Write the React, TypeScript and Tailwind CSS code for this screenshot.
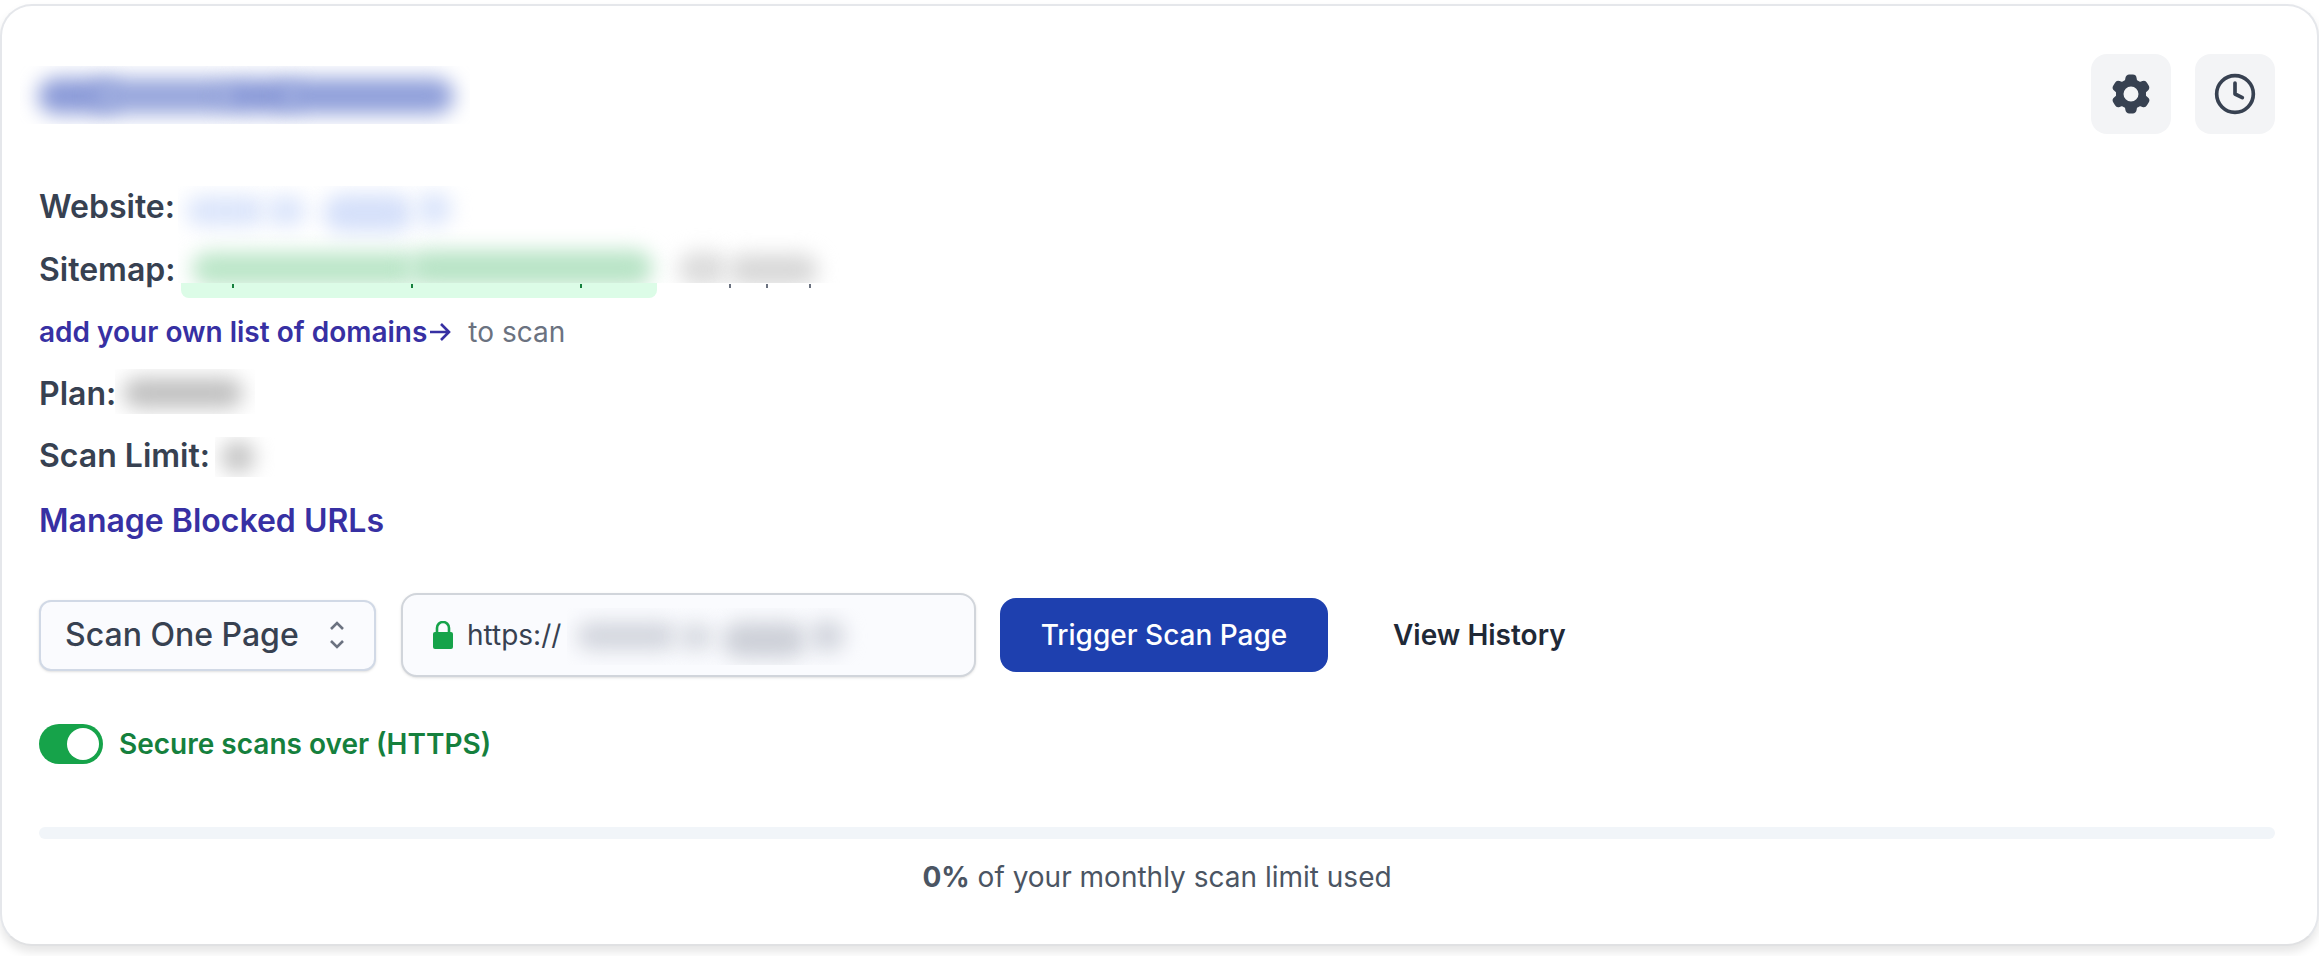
import { Clock } from "lucide-react";
import { HiCog6Tooth } from "react-icons/hi2";

// stands in for the redacted values in the reference: soft smudges clipped to a box
function Smudge({ className, blobs }: { className: string; blobs: string[] }) {
  return (
    <div className={`absolute overflow-hidden bg-white ${className}`}>
      {blobs.map((b, i) => (
        <div key={i} className={`absolute rounded-full blur-[10px] ${b}`} />
      ))}
    </div>
  );
}

export default function App() {
  return (
    <div className="h-[956px] overflow-hidden bg-white pt-1 font-['Inter',sans-serif]">
      <div className="relative h-[942px] rounded-[32px] border-2 border-[#e5e7eb] border-b-[#e0e1e3] bg-white pl-[37px] pr-[42px] shadow-[0_6px_10px_rgba(0,0,0,0.1)]">
        {/* Header */}
        <div className="flex h-[128px] items-end justify-end gap-6">
          <button className="flex h-20 w-20 items-center justify-center rounded-2xl bg-[#f3f4f6] text-[#374151]">
            <HiCog6Tooth className="h-12 w-12" />
          </button>
          <button className="flex h-20 w-20 items-center justify-center rounded-2xl bg-[#f3f4f6] text-[#374151]">
            <Clock size={44} strokeWidth={2} />
          </button>
        </div>
        <Smudge
          className="left-[18px] top-[60px] h-[58px] w-[450px]"
          blobs={[
            "left-[18px] top-[12px] h-[36px] w-[80px] bg-[#8a9ad8]",
            "left-[75px] top-[12px] h-[36px] w-[140px] bg-[#97a6dc]",
            "left-[200px] top-[12px] h-[36px] w-[80px] bg-[#8a9ad8]",
            "left-[262px] top-[12px] h-[36px] w-[172px] bg-[#8f9fda]",
          ]}
        />

        {/* Details */}
        <div className="text-[32px] font-semibold text-[#374151]">
          <div className="mt-[42px] flex h-[62px] items-center">
            <span>Website:</span>
          </div>
          <div className="flex h-[64px] items-center">
            <span>Sitemap:</span>
            <span className="relative ml-[6px] mt-[8px] h-[47px] w-[476px] rounded-lg bg-[#dcfce7]">
              {["left-[51px] bg-[#15803d]", "left-[230px] bg-[#15803d]", "left-[399px] bg-[#15803d]", "left-[548px] bg-[#6b7280]", "left-[585px] bg-[#6b7280]", "left-[628px] bg-[#6b7280]"].map((t) => (
                <span key={t} className={`absolute top-[33px] h-[4px] w-[2px] ${t}`} />
              ))}
            </span>
          </div>
          <Smudge
            className="left-[176px] top-[180px] h-[97px] w-[666px]"
            blobs={[
              "left-[8px] top-[10px] h-[30px] w-[80px] bg-[#dbe5fb]",
              "left-[88px] top-[10px] h-[30px] w-[40px] bg-[#dbe5fb]",
              "left-[145px] top-[8px] h-[38px] w-[90px] bg-[#d5e0fa]",
              "left-[238px] top-[6px] h-[34px] w-[36px] bg-[#dbe5fb]",
              "left-[14px] top-[66px] h-[34px] w-[225px] bg-[#bbe6c8]",
              "left-[230px] top-[64px] h-[36px] w-[245px] bg-[#b8e4c6]",
              "left-[500px] top-[66px] h-[34px] w-[50px] bg-[#dcdcdc]",
              "left-[550px] top-[68px] h-[32px] w-[90px] bg-[#d8d8d8]",
            ]}
          />
          <div className="flex h-[62px] items-center pb-[2px] text-[28px] font-normal">
            <a className="flex items-center font-semibold text-[#3730a3]">
              add your own list of domains
              <svg viewBox="0 0 24 24" className="ml-[1px] h-[24px] w-[24px]" fill="none" stroke="currentColor" strokeWidth="2.6">
                <path d="M2 12h19M13 4l8 8-8 8" />
              </svg>
            </a>
            <span className="ml-4 text-[#6b7280]">to scan</span>
          </div>
          <div className="flex h-[59px] items-center">Plan:</div>
          <Smudge
            className="left-[113px] top-[363px] h-[45px] w-[140px]"
            blobs={["left-[8px] top-[9px] h-[30px] w-[120px] bg-[#c0c0c0]"]}
          />
          <div className="flex h-[66px] items-center">Scan Limit:</div>
          <Smudge
            className="left-[213px] top-[431px] h-[40px] w-[60px]"
            blobs={["left-[6px] top-[4px] h-[32px] w-[34px] bg-[#c4c4c4]"]}
          />
          <div className="flex h-[64px] items-center">
            <a className="font-semibold text-[#3730a3]">Manage Blocked URLs</a>
          </div>
        </div>

        {/* Scan controls */}
        <div className="mt-[40px] flex items-center text-[28px]">
          <div className="flex h-[71px] w-[337px] items-center justify-between rounded-xl border-2 border-[#d1d9e6] bg-[#fafbfe] pl-[24px] pr-[28px] text-[32px] font-medium text-[#374151] shadow-sm">
            Scan One Page
            <svg viewBox="0 0 18 32" className="h-[32px] w-[18px]" fill="none" stroke="#6b7280" strokeWidth="2.6">
              <path d="M3 10l6-6 6 6M3 22l6 6 6-6" />
            </svg>
          </div>
          <div className="relative ml-[25px] flex h-[84px] w-[575px] items-center rounded-2xl border-2 border-[#d1d5db] bg-[#fafbfe] pl-[30px] text-[#374151] shadow-sm">
            <svg viewBox="0 0 20 28" className="h-[28px] w-[20px]" fill="#16a34a">
              <rect x="0" y="11" width="20" height="17" rx="2" />
              <path d="M4 12V7a6 6 0 0 1 12 0v5" fill="none" stroke="#16a34a" strokeWidth="2.6" />
            </svg>
            <span className="ml-[14px]">https://</span>
            <Smudge
              className="left-[164px] top-[13px] h-[57px] w-[305px] !bg-[#fafbfe]"
              blobs={[
                "left-[10px] top-[14px] h-[28px] w-[100px] bg-[#d2d5dd]",
                "left-[112px] top-[16px] h-[26px] w-[34px] bg-[#d5d8df]",
                "left-[155px] top-[14px] h-[36px] w-[85px] bg-[#cdd0d8]",
                "left-[242px] top-[12px] h-[32px] w-[36px] bg-[#d2d5dd]",
              ]}
            />
          </div>
          <button className="ml-[24px] h-[74px] w-[328px] rounded-2xl bg-[#1e40af] font-medium text-white">
            Trigger Scan Page
          </button>
          <button className="ml-[65px] font-semibold text-[#1f2937]">View History</button>
        </div>

        {/* HTTPS toggle */}
        <div className="mt-[46px] flex items-center">
          <div className="flex h-10 w-[64px] items-center justify-end rounded-full bg-[#16a34a] pr-[4px]">
            <div className="h-8 w-8 rounded-full bg-white" />
          </div>
          <span className="ml-4 text-[28px] font-semibold text-[#15803d]">Secure scans over (HTTPS)</span>
        </div>

        {/* Usage */}
        <div className="mt-[62px] h-3 rounded-full bg-[#f1f5f9]" />
        <p className="mt-[17px] text-center text-[28px] text-[#4b5563]">
          <span className="font-bold">0%</span> of your monthly scan limit used
        </p>
      </div>
    </div>
  );
}
